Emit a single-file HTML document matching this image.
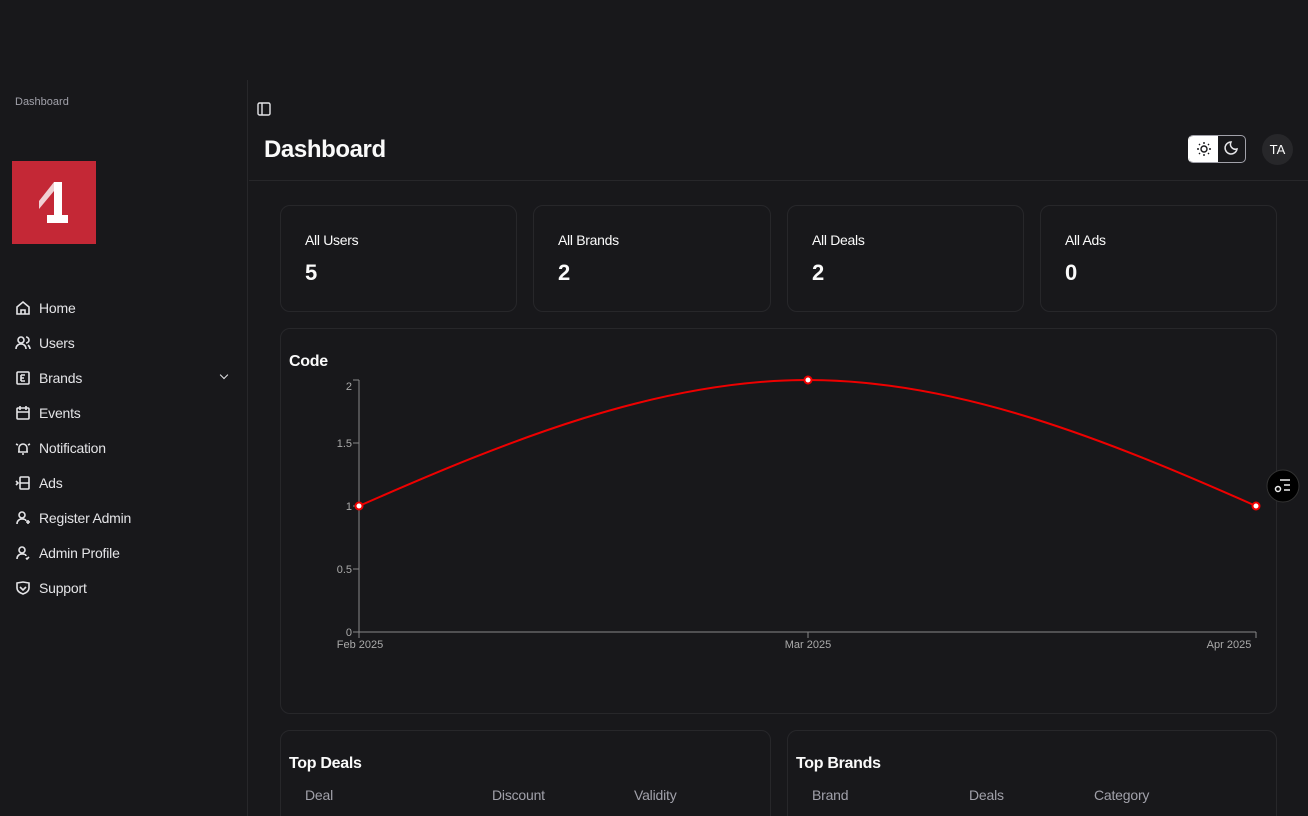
<!DOCTYPE html>
<html><head><style>
*{margin:0;padding:0;box-sizing:border-box}
html,body{width:1308px;height:816px;overflow:hidden}
body{background:#18181b;font-family:"Liberation Sans",sans-serif;color:#fafafa;position:relative}
.side{position:absolute;left:0;top:80px;width:248px;height:736px;border-right:1px solid #27272a}
.crumb{position:absolute;left:15px;top:16px;font-size:11px;color:#a1a1aa}
.logo{position:absolute;left:12px;top:81px;width:84px;height:83px;background:#c42836}
.nav{position:absolute;left:15px;top:210px;width:220px}
.nav div{height:35px;display:flex;align-items:center;font-size:14px;color:#e4e4e7;letter-spacing:-0.2px}
.nav svg{width:16px;height:16px;margin-right:8px;stroke:#e4e4e7;fill:none;stroke-width:1.6}
.hdr{position:absolute;left:249px;top:80px;right:0;height:101px;border-bottom:1px solid #27272a}
.card{position:absolute;border:1px solid #27272a;border-radius:10px}
.card .l{position:absolute;left:24px;top:26px;font-size:14px;letter-spacing:-0.3px}
.card .v{position:absolute;left:24px;top:54px;font-size:22px;font-weight:bold}
h3{font-size:16px;font-weight:bold;position:absolute;letter-spacing:-0.3px}
.th{position:absolute;top:56px;font-size:14px;color:#a1a1aa;letter-spacing:-0.2px}
</style></head><body>
<div class="side">
<div class="crumb">Dashboard</div>
<div class="logo"><svg width="84" height="83" viewBox="0 0 84 83"><path d="M42 21 L42 54 L35 54 L35 62 L56 62 L56 54 L50 54 L50 21 Z" fill="#fff"/><path d="M27 40 L42 21 L42 30 L27 48 Z" fill="#f0d0d3"/></svg></div>
<div class="nav">
<div><svg viewBox="0 0 16 16"><path d="M2 7l6-5 6 5v7H2z M6 14v-4h4v4"/></svg>Home</div>
<div><svg viewBox="0 0 16 16"><circle cx="6" cy="5" r="3"/><path d="M1 14c0-3 2-5 5-5s5 2 5 5M11 2a3 3 0 010 6M13 10c1 1 2 2 2 4"/></svg>Users</div>
<div style="position:relative"><svg viewBox="0 0 16 16"><rect x="2" y="2" width="12" height="12" rx="1"/><path d="M6 5h4M6 8h3M6 11h4M6 5v6"/></svg>Brands<span style="position:absolute;right:8px;top:12px;width:6px;height:6px;border-right:1.5px solid #e4e4e7;border-bottom:1.5px solid #e4e4e7;transform:rotate(45deg)"></span></div>
<div><svg viewBox="0 0 16 16"><rect x="2" y="3" width="12" height="11" rx="1"/><path d="M2 7h12M5 1v4M11 1v4"/></svg>Events</div>
<div><svg viewBox="0 0 16 16"><path d="M4 12V8a4 4 0 018 0v4H3h10M7 14h2M1 4l2 1M15 4l-2 1"/></svg>Notification</div>
<div><svg viewBox="0 0 16 16"><rect x="5" y="2" width="9" height="12" rx="1"/><path d="M5 8h9M1 6l2 2-2 2"/></svg>Ads</div>
<div><svg viewBox="0 0 16 16"><circle cx="7" cy="5" r="3"/><path d="M2 14c0-3 2-5 5-5s4 1 4 2M13 10v4M11 12h4"/></svg>Register Admin</div>
<div><svg viewBox="0 0 16 16"><circle cx="7" cy="5" r="3"/><path d="M2 14c0-3 2-5 5-5s4 1 4 2M11 13l1 1 2-2"/></svg>Admin Profile</div>
<div><svg viewBox="0 0 16 16"><path d="M2 3l6-1 6 1v5c0 3-3 5-6 6-3-1-6-3-6-6z M5 7l3 3 3-3"/></svg>Support</div>
</div>
</div>
<div class="hdr">
<svg style="position:absolute;left:8px;top:22px" width="14" height="14" viewBox="0 0 14 14" fill="none" stroke="#e4e4e7" stroke-width="1.4"><rect x="1" y="1" width="12" height="12" rx="1.5"/><path d="M5 1v12"/></svg>
<div style="position:absolute;left:15px;top:56px;font-size:24px;font-weight:bold;letter-spacing:-0.4px">Dashboard</div>
<div style="position:absolute;left:939px;top:55px;width:58px;height:28px;border:1px solid #a1a1aa;border-left-color:#fff;border-radius:5px;overflow:hidden"><div style="width:29px;height:28px;background:#fff;position:absolute;left:0;top:0"></div>
<svg style="position:absolute;left:7px;top:5px" width="16" height="16" viewBox="0 0 16 16" fill="none" stroke="#18181b" stroke-width="1.4"><circle cx="8" cy="8" r="3"/><path d="M8 1v2M8 13v2M1 8h2M13 8h2M3 3l1 1M12 12l1 1M3 13l1-1M12 4l1-1"/></svg>
<svg style="position:absolute;left:34px;top:4px" width="16" height="16" viewBox="0 0 16 16" fill="none" stroke="#e4e4e7" stroke-width="1.5"><path d="M8 2a6 6 0 106 7A5 5 0 018 2z"/></svg></div>
<div style="position:absolute;left:1013px;top:54px;width:31px;height:31px;border-radius:50%;background:#27272a;font-size:13px;text-align:center;line-height:31px">TA</div>
</div>
<div class="card" style="left:280px;top:205px;width:237px;height:107px"><div class="l">All Users</div><div class="v">5</div></div>
<div class="card" style="left:533px;top:205px;width:238px;height:107px"><div class="l">All Brands</div><div class="v">2</div></div>
<div class="card" style="left:787px;top:205px;width:237px;height:107px"><div class="l">All Deals</div><div class="v">2</div></div>
<div class="card" style="left:1040px;top:205px;width:237px;height:107px"><div class="l">All Ads</div><div class="v">0</div></div>
<div class="card" style="left:280px;top:328px;width:997px;height:386px"><h3 style="left:8px;top:24px">Code</h3></div>
<svg style="position:absolute;left:0;top:0" width="1308" height="816">
<g stroke="#888" stroke-width="1" fill="none"><path d="M359 380V632H1256M353 380h6M353 443h6M353 506h6M353 569h6M353 632h6M359 632v6M808 632v6M1256 632v6"/></g>
<g fill="#aaa" font-size="11" font-family="Liberation Sans" text-anchor="end"><text x="352" y="390">2</text><text x="352" y="447">1.5</text><text x="352" y="510">1</text><text x="352" y="573">0.5</text><text x="352" y="636">0</text></g>
<g fill="#aaa" font-size="11" font-family="Liberation Sans" text-anchor="middle"><text x="360" y="648">Feb 2025</text><text x="808" y="648">Mar 2025</text><text x="1229" y="648">Apr 2025</text></g>
<path d="M359 506C509 440 658 380 808 380S1107 440 1256 506" stroke="#e00" stroke-width="2" fill="none"/>
<g fill="#fff" stroke="#e00" stroke-width="2"><circle cx="359" cy="506" r="3.5"/><circle cx="808" cy="380" r="3.5"/><circle cx="1256" cy="506" r="3.5"/></g>
<circle cx="1283" cy="486" r="16" fill="#000" stroke="#333"/>
<g stroke="#eee" stroke-width="1.5"><path d="M1280 480h10M1284 485h6M1284 490h6"/><circle cx="1278" cy="489" r="2.5" fill="none"/></g>
</svg>
<div class="card" style="left:280px;top:730px;width:491px;height:120px"><h3 style="left:8px;top:24px">Top Deals</h3><div class="th" style="left:24px">Deal</div><div class="th" style="left:211px">Discount</div><div class="th" style="left:353px">Validity</div></div>
<div class="card" style="left:787px;top:730px;width:490px;height:120px"><h3 style="left:8px;top:24px">Top Brands</h3><div class="th" style="left:24px">Brand</div><div class="th" style="left:181px">Deals</div><div class="th" style="left:306px">Category</div></div>
</body></html>
